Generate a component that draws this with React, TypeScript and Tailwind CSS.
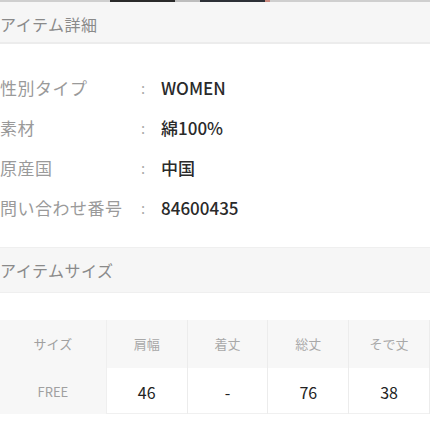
import React from "react";

const font = { fontFamily: '"Noto Sans CJK JP", "Noto Sans", sans-serif' };

const rows: [string, string][] = [
  ["性別タイプ", "WOMEN"],
  ["素材", "綿100%"],
  ["原産国", "中国"],
  ["問い合わせ番号", "84600435"],
];

const heads = ["肩幅", "着丈", "総丈", "そで丈"];
const vals = ["46", "-", "76", "38"];

export default function App() {
  return (
    <div className="w-[430px] h-[430px] overflow-hidden bg-white" style={font}>
      <div className="flex h-[2px] bg-[#cfcfcf]">
        <div className="w-[110px]" />
        <div className="w-[65px] bg-[#2a2a2a]" />
        <div className="w-[25px] bg-[#bdbdbd]" />
        <div className="w-[65px] bg-[#2d3036]" />
        <div className="w-[5px] bg-[#c98a80]" />
      </div>
      <div className="h-[42px] bg-[#f6f6f6] flex items-center pt-[4px] border-b-2 border-[#ececec]">
        <span className="text-[16px] text-[#8a8a8a] tracking-[0.5px]">アイテム詳細</span>
      </div>
      <div className="pt-[24px] flex flex-col">
        {rows.map(([k, v]) => (
          <div key={k} className="flex items-center h-[40px]">
            <span className="w-[141px] text-[17px] text-[#9a9a9a] tracking-[0.5px]">{k}</span>
            <span className="w-[20px] text-[15px] text-[#aaaaaa]">:</span>
            <span className="text-[17px] text-[#2a2a2a] font-medium">{v}</span>
          </div>
        ))}
      </div>
      <div className="mt-[19px] h-[46px] bg-[#f6f6f6] flex items-center border-t border-[#efefef] border-b">
        <span className="text-[16px] text-[#8a8a8a] tracking-[0.5px]">アイテムサイズ</span>
      </div>
      <div className="mt-[27px] flex">
        <div className="w-[107px] flex flex-col bg-[#f7f7f7] border-r border-[#efefef]">
          <div className="h-[48px] flex items-center justify-center text-[13px] text-[#a0a0a0]">サイズ</div>
          <div className="h-[46px] flex items-center justify-center pt-[2px] text-[13px] text-[#a0a0a0]">FREE</div>
        </div>
        {heads.map((h, i) => (
          <div key={h} className="w-[81px] flex flex-col border-r border-[#ececec]">
            <div className="h-[48px] flex items-center justify-center text-[13px] text-[#a8a8a8] bg-[#f7f7f7]">{h}</div>
            <div className="h-[46px] flex items-center justify-center pt-[2px] text-[16px] text-[#222] bg-white border-b border-[#f0f0f0]">{vals[i]}</div>
          </div>
        ))}
      </div>
    </div>
  );
}
